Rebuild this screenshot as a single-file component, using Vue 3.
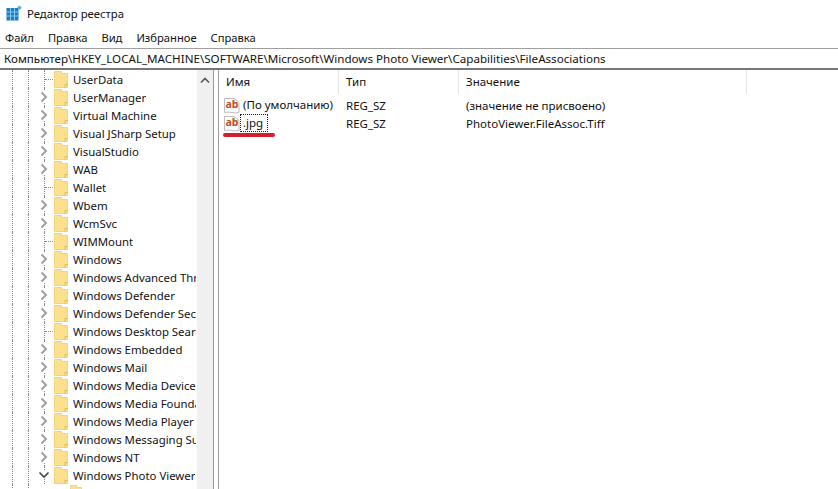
<script setup>
const menu = ['Файл', 'Правка', 'Вид', 'Избранное', 'Справка']

const tree = [
  { name: 'UserData', leaf: true },
  { name: 'UserManager' },
  { name: 'Virtual Machine' },
  { name: 'Visual JSharp Setup' },
  { name: 'VisualStudio' },
  { name: 'WAB' },
  { name: 'Wallet', leaf: true },
  { name: 'Wbem' },
  { name: 'WcmSvc' },
  { name: 'WIMMount', leaf: true },
  { name: 'Windows' },
  { name: 'Windows Advanced Threat Protection' },
  { name: 'Windows Defender' },
  { name: 'Windows Defender Security Center' },
  { name: 'Windows Desktop Search', leaf: true },
  { name: 'Windows Embedded' },
  { name: 'Windows Mail' },
  { name: 'Windows Media Device Manager' },
  { name: 'Windows Media Foundation' },
  { name: 'Windows Media Player NSS' },
  { name: 'Windows Messaging Subsystem' },
  { name: 'Windows NT' },
  { name: 'Windows Photo Viewer', open: true }
]

const values = [
  { name: '(По умолчанию)', type: 'REG_SZ', data: '(значение не присвоено)' },
  { name: '.jpg', type: 'REG_SZ', data: 'PhotoViewer.FileAssoc.Tiff', selected: true }
]
</script>

<template>
  <div class="window">
    <div class="titlebar">
      <svg class="app-icon" width="16" height="16" viewBox="0 0 16 16">
        <rect x="0.500" y="3" width="12" height="12.500" fill="#1a7cc2" />
        <path d="M0.500 7h12M0.500 11h12M4.500 3v12.500M8.500 3v12.500" stroke="#8cc6ea" stroke-width="1" />
        <path d="M13.500 0.500l2.300 2.300-2.300 2.300-2.300-2.300z" fill="#5aa6d8" />
      </svg>
      <span>Редактор реестра</span>
    </div>

    <div class="menubar">
      <span v-for="item in menu" :key="item">{{ item }}</span>
    </div>

    <div class="address">Компьютер\HKEY_LOCAL_MACHINE\SOFTWARE\Microsoft\Windows Photo Viewer\Capabilities\FileAssociations</div>

    <div class="panes">
      <div class="tree-pane">
        <div class="tree">
          <div v-for="row in tree" :key="row.name" class="tree-row">
            <span class="guide"></span>
            <span class="twisty">
              <i v-if="row.leaf" class="dots"></i>
              <svg v-else-if="row.open" class="chev-open" width="12" height="8" viewBox="0 0 12 8">
                <path d="M1.500 1.500L6 6l4.500-4.500" fill="none" stroke="#444" stroke-width="1.600" />
              </svg>
              <svg v-else class="chev" width="8" height="12" viewBox="0 0 8 12">
                <path d="M1.500 1.500L6 6l-4.500 4.500" fill="none" stroke="#a0a0a0" stroke-width="2" />
              </svg>
            </span>
            <svg class="folder" width="14" height="17" viewBox="0 0 14 17">
              <path d="M0.500 0.500h7v2h6v14h-13z" fill="#fbe08e" stroke="#f2d47c" />
              <path d="M11 16.500v-3h2.500" fill="none" stroke="#e0bb58" />
            </svg>
            <span class="tree-label">{{ row.name }}</span>
          </div>
          <div class="tree-row">
            <span class="guide"></span>
            <span class="twisty"></span>
            <svg class="folder child" width="12" height="17" viewBox="0 0 12 17">
              <path d="M0.500 0.500h6v2h5v14h-11z" fill="#fbe08e" stroke="#f2d47c" />
            </svg>
          </div>
        </div>
        <div class="scrollbar">
          <svg width="10" height="7" viewBox="0 0 10 7">
            <path d="M1 5.500l4-4 4 4" fill="none" stroke="#555" stroke-width="1.600" />
          </svg>
        </div>
      </div>

      <div class="list-pane">
        <div class="list-head">
          <span class="col-name">Имя</span>
          <span class="col-type">Тип</span>
          <span class="col-data">Значение</span>
        </div>
        <div v-for="row in values" :key="row.name" class="list-row">
          <span class="col-name cell-name">
            <svg class="ab-icon" width="16" height="17" viewBox="0 0 16 17">
              <path d="M0.500 1.500h10l4.500 4v10c-4 1.500-10-1.500-14.500 0z" fill="#fff" stroke="#bdbdbd" />
              <path d="M10.500 1.500v4h4.500" fill="none" stroke="#d5d5d5" />
              <text x="1.500" y="11" class="ab-text">ab</text>
            </svg>
            <span class="value-name" :class="{ focused: row.selected }">{{ row.name }}</span>
          </span>
          <span class="col-type">{{ row.type }}</span>
          <span class="col-data">{{ row.data }}</span>
        </div>
        <div class="underline"></div>
      </div>
    </div>
  </div>
</template>

<style scoped>
.window {
  width: 838px;
  height: 489px;
  overflow: hidden;
  display: flex;
  flex-direction: column;
  background: #fff;
  color: #111;
  font-family: "Noto Sans", "Open Sans", sans-serif;
  font-size: 11.5px;
}

.titlebar {
  height: 26px;
  display: flex;
  align-items: center;
  gap: 5px;
  padding-left: 6px;
  font-size: 11.300px;
}

.app-icon {
  flex: none;
}

.menubar {
  height: 22px;
  display: flex;
  align-items: center;
  gap: 14px;
  padding-left: 5px;
  font-size: 11.200px;
}

.address {
  height: 19px;
  line-height: 19px;
  border-top: 1px solid #a0a0a0;
  border-bottom: 2px solid #777;
  padding-left: 4px;
  font-size: 11.600px;
  white-space: nowrap;
  overflow: hidden;
}

.panes {
  flex: 1;
  min-height: 0;
  display: flex;
}

.tree-pane {
  width: 213px;
  flex: none;
  display: flex;
  border-right: 1px solid #9a9a9a;
  overflow: hidden;
}

.tree {
  flex: 1;
  min-width: 0;
  margin-right: 1px;
  overflow: hidden;
  font-size: 11.400px;
}

.tree-row {
  height: 18px;
  display: flex;
  align-items: center;
  white-space: nowrap;
}

.guide {
  width: 17px;
  height: 18px;
  margin: 0 8px 0 12px;
  flex: none;
  box-sizing: border-box;
  border-left: 1px dotted #888;
  border-right: 1px dotted #888;
}

.twisty {
  width: 17px;
  height: 18px;
  flex: none;
  display: flex;
  align-items: center;
  position: relative;
}

.twisty::before {
  content: '';
  position: absolute;
  left: 7px;
  top: 0;
  height: 18px;
  border-left: 1px dotted #888;
}

.twisty:empty::before {
  display: none;
}

.chev,
.chev-open {
  position: relative;
  background: #fff;
}

.chev {
  margin-left: 3px;
}

.chev-open {
  margin-left: 1px;
}

.dots {
  position: absolute;
  left: 8px;
  top: 9px;
  width: 8px;
  border-top: 1px dotted #888;
}

.folder {
  flex: none;
  margin-right: 5px;
}

.folder.child {
  margin-left: 16px;
}

.tree-label {
  overflow: hidden;
}

.scrollbar {
  width: 16px;
  flex: none;
  background: #f0f0f0;
  display: flex;
  justify-content: center;
  align-items: flex-start;
  padding-top: 7px;
}

.list-pane {
  flex: 1;
  margin-left: 4px;
  border-left: 1px solid #9a9a9a;
  position: relative;
}

.list-head {
  height: 26px;
  display: flex;
  align-items: center;
  padding-bottom: 2px;
  box-sizing: border-box;
}

.list-head .col-name,
.list-head .col-type {
  border-right: 1px solid #e5e5e5;
}

.list-head .col-data {
  width: 288px;
  flex: none;
  border-right: 1px solid #e5e5e5;
}

.list-head span {
  height: 24px;
  line-height: 24px;
  box-sizing: border-box;
  padding-left: 7px;
}

.list-row {
  height: 18px;
  display: flex;
  align-items: center;
}

.col-name {
  width: 120px;
  flex: none;
  box-sizing: border-box;
}

.col-type {
  width: 120px;
  flex: none;
  box-sizing: border-box;
  padding-left: 7px;
}

.col-data {
  padding-left: 7px;
  white-space: nowrap;
}

.list-row .cell-name {
  display: flex;
  align-items: center;
  padding-left: 5px;
  white-space: nowrap;
}

.ab-icon {
  flex: none;
}

.ab-text {
  font-family: "Noto Sans", sans-serif;
  font-size: 10.500px;
  font-weight: 700;
  fill: #bb4f2c;
}

.value-name {
  padding: 0 4px 0 2px;
  line-height: 16px;
  border: 1px dotted transparent;
}

.value-name.focused {
  border-color: #222;
}

.underline {
  position: absolute;
  left: 4px;
  top: 63px;
  width: 52px;
  height: 4px;
  border-radius: 2px;
  background: #d3202e;
}
</style>
